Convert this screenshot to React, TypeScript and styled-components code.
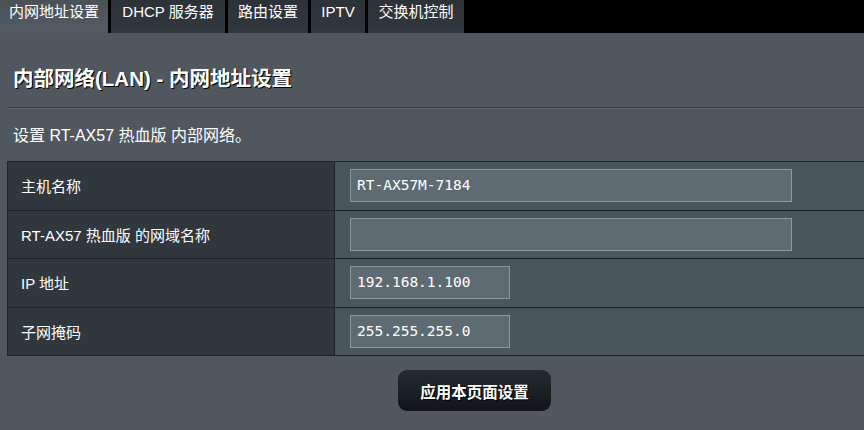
import React from "react";
import styled, { createGlobalStyle } from "styled-components";

const GlobalStyle = createGlobalStyle`
  html, body {
    margin: 0;
    padding: 0;
    background: #50575f;
    font-family: "Liberation Sans", Arial, "Noto Sans CJK SC", sans-serif;
    color: #fff;
    overflow: hidden;
  }
`;

const Page = styled.div`
  width: 864px;
  height: 430px;
  background: #50575f;
`;

const TabBar = styled.nav`
  display: flex;
  height: 33px;
  background: #000;
  gap: 3px;
`;

const Tab = styled.div<{ $active?: boolean; $w: number }>`
  width: ${(p) => p.$w}px;
  height: 33px;
  box-sizing: border-box;
  padding-top: 3px;
  text-align: center;
  font-size: 15px;
  line-height: 18px;
  color: #fff;
  white-space: nowrap;
  background: ${(p) =>
    p.$active
      ? "linear-gradient(to bottom, #4a5157 0%, #545b62 100%)"
      : "linear-gradient(to bottom, #2c3338 0%, #30373d 100%)"};
`;

const Content = styled.div`
  padding: 0 0 0 7px;
`;

const Title = styled.h1`
  margin: 0;
  padding: 34px 0 16px 6px;
  font-size: 20.5px;
  line-height: 24px;
  font-weight: bold;
  text-shadow: 1px 1px 0 #000;
  border-bottom: 1px solid #353b41;
  box-shadow: 0 1px 0 #5f676e;
`;

const Desc = styled.p`
  margin: 0;
  padding: 18px 0 0 6px;
  height: 35px;
  font-size: 16px;
  line-height: 20px;
`;

const Table = styled.div`
  border: 1px solid #1f2428;
  border-right: none;
  background: #1f2428;
  display: grid;
  grid-template-columns: 326px 1fr;
  gap: 1px;
`;

const Label = styled.div`
  height: 47.5px;
  background: #30383e;
  display: flex;
  align-items: center;
  padding-left: 13px;
  font-size: 15px;
`;

const Cell = styled.div`
  height: 47.5px;
  background: #4a565d;
  display: flex;
  align-items: center;
  padding-left: 15px;
`;

const Field = styled.div<{ $w: number }>`
  width: ${(p) => p.$w}px;
  height: 33px;
  box-sizing: border-box;
  border: 1px solid #8d989e;
  background: #5e6b72;
  font-family: "DejaVu Sans Mono", monospace;
  font-size: 14.5px;
  line-height: 31px;
  padding-left: 6px;
  color: #fff;
`;

const Footer = styled.div`
  display: flex;
  justify-content: center;
  padding-top: 14px;
  padding-left: 78px;
`;

const ApplyButton = styled.button`
  width: 153px;
  height: 41px;
  border: none;
  border-radius: 9px;
  background: linear-gradient(to bottom, #252c31 0%, #111518 100%);
  color: #fff;
  font-family: "Liberation Sans", "Noto Sans CJK SC", sans-serif;
  font-size: 15.5px;
  font-weight: bold;
  text-shadow: 1px 1px 0 #000;
`;

const tabs = [
  { name: "内网地址设置", w: 108, active: true },
  { name: "DHCP 服务器", w: 114 },
  { name: "路由设置", w: 80 },
  { name: "IPTV", w: 54 },
  { name: "交换机控制", w: 96 },
];

const rows = [
  { label: "主机名称", value: "RT-AX57M-7184", w: 442 },
  { label: "RT-AX57 热血版 的网域名称", value: "", w: 442 },
  { label: "IP 地址", value: "192.168.1.100", w: 160 },
  { label: "子网掩码", value: "255.255.255.0", w: 160 },
];

export default function App() {
  return (
    <Page>
      <GlobalStyle />
      <TabBar>
        {tabs.map((t) => (
          <Tab key={t.name} $w={t.w} $active={t.active}>
            {t.name}
          </Tab>
        ))}
      </TabBar>
      <Content>
        <Title>内部网络(LAN) - 内网地址设置</Title>
        <Desc>设置 RT-AX57 热血版 内部网络。</Desc>
        <Table>
          {rows.map((r) => (
            <React.Fragment key={r.label}>
              <Label>{r.label}</Label>
              <Cell>
                <Field $w={r.w}>{r.value}</Field>
              </Cell>
            </React.Fragment>
          ))}
        </Table>
        <Footer>
          <ApplyButton>应用本页面设置</ApplyButton>
        </Footer>
      </Content>
    </Page>
  );
}
